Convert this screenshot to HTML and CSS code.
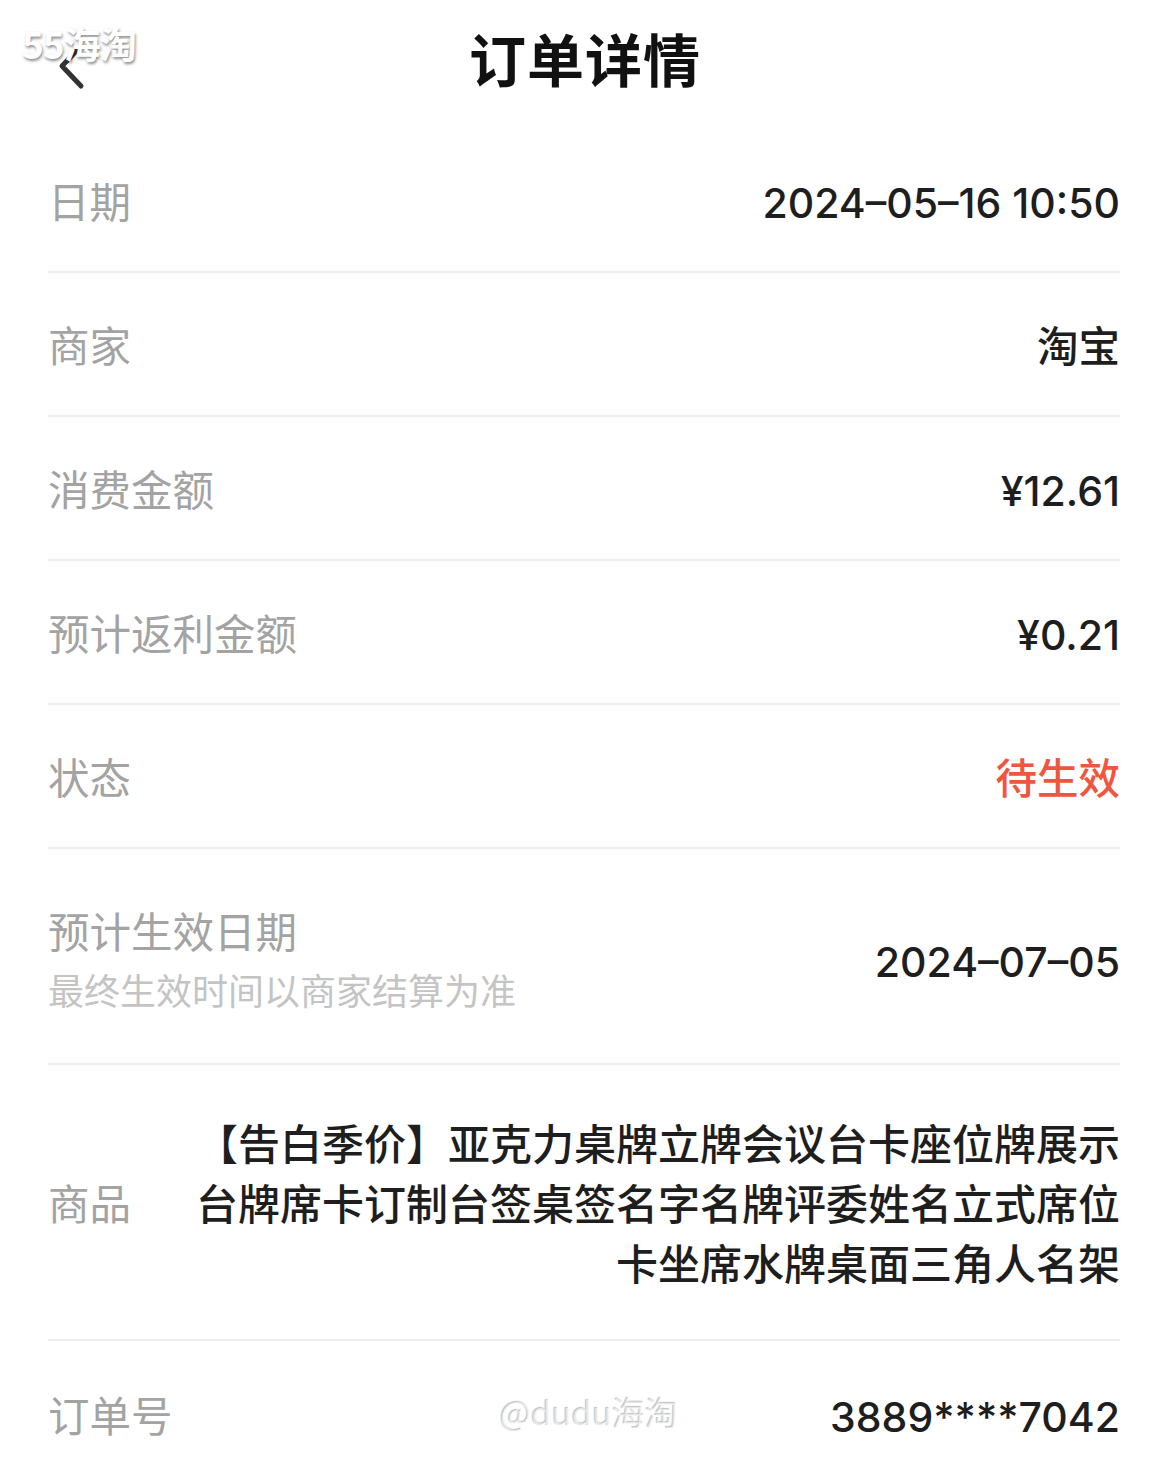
FILE: index.html
```html
<!DOCTYPE html>
<html lang="zh-CN">
<head>
    <meta charset="UTF-8" />
    <title>订单详情</title>
    <link rel="stylesheet" href="styles.css">
</head>
<body>
    <div id="page">
        <header class="top">
            <a href="javascript:;" class="back">
                <svg width="40" height="60" viewBox="0 0 40 60">
                    <polyline points="24,6 5,26 24,46" fill="none" stroke="#333" stroke-width="5" stroke-linecap="round" stroke-linejoin="round" />
                </svg>
            </a>
            <h1>订单详情</h1>
        </header>
        <ul class="list">
            <li class="row">
                <span class="label">日期</span>
                <span class="val num">2024–05–16 10:50</span>
            </li>
            <li class="row">
                <span class="label">商家</span>
                <span class="val">淘宝</span>
            </li>
            <li class="row">
                <span class="label">消费金额</span>
                <span class="val num">¥12.61</span>
            </li>
            <li class="row">
                <span class="label">预计返利金额</span>
                <span class="val num">¥0.21</span>
            </li>
            <li class="row">
                <span class="label">状态</span>
                <span class="val red">待生效</span>
            </li>
            <li class="row tall">
                <div class="label-box">
                    <span class="label">预计生效日期</span>
                    <span class="sub">最终生效时间以商家结算为准</span>
                </div>
                <span class="val num">2024–07–05</span>
            </li>
            <li class="row goods">
                <span class="label">商品</span>
                <span class="val long">【告白季价】亚克力桌牌立牌会议台卡座位牌展示台牌席卡订制台签桌签名字名牌评委姓名立式席位卡坐席水牌桌面三角人名架</span>
            </li>
            <li class="row last">
                <span class="label">订单号</span>
                <span class="val num">3889****7042</span>
            </li>
        </ul>
        <div class="mark-top">55海淘</div>
        <div class="mark-bottom">@dudu海淘</div>
    </div>
</body>
</html>
```

FILE: styles.css
```css
body{
    margin: 0;
    background: #fff;
    font-family: "Noto Sans CJK SC", "Noto Sans", sans-serif;
}
#page{
    width: 1170px;
    height: 1464px;
    overflow: hidden;
    position: relative;
}
.top{
    height: 129px;
    display: flex;
    align-items: center;
    justify-content: center;
    position: relative;
}
.top h1{
    margin: 0 0 16px;
    font-size: 57px;
    font-weight: 700;
    color: #111;
    letter-spacing: 1px;
}
.back{
    position: absolute;
    left: 57px;
    top: 40px;
    width: 40px;
    height: 60px;
}
.list{
    margin: 0;
    padding: 0 50px 0 48px;
    list-style: none;
}
.row{
    display: flex;
    align-items: center;
    justify-content: space-between;
    min-height: 142px;
    border-bottom: 2px solid #ececec;
}
.label{
    font-size: 41.5px;
    color: #a3a3a3;
    white-space: nowrap;
}
.val{
    font-size: 41.5px;
    font-weight: 500;
    color: #1e1e1e;
    text-align: right;
}
.num{
    font-family: Inter, "Noto Sans CJK SC", sans-serif;
    font-size: 41px;
    padding-top: 6px;
}
.red{
    color: #f1543f;
}
.tall{
    padding: 51px 0 45px;
    min-height: 0;
}
.label-box{
    display: flex;
    flex-direction: column;
}
.label-box .label{
    line-height: 60px;
}
.sub{
    font-size: 36px;
    color: #c4c4c4;
    line-height: 58px;
}
.goods{
    padding: 47px 0;
    min-height: 0;
}
.long{
    width: 930px;
    font-size: 42px;
    line-height: 60px;
}
.last{
    border-bottom: none;
    min-height: 146px;
}
.mark-top{
    position: absolute;
    left: 22px;
    top: 16px;
    font-size: 37px;
    font-weight: 700;
    color: #fff;
    letter-spacing: -1px;
    text-shadow: 1px 2px 3px rgba(0,0,0,.45);
}
.mark-bottom{
    position: absolute;
    left: 500px;
    top: 1388px;
    font-size: 33px;
    color: rgba(255,255,255,.6);
    text-shadow: -1px -1px 1px rgba(0,0,0,.25), 1px 1px 1px rgba(255,255,255,.8);
}
```
